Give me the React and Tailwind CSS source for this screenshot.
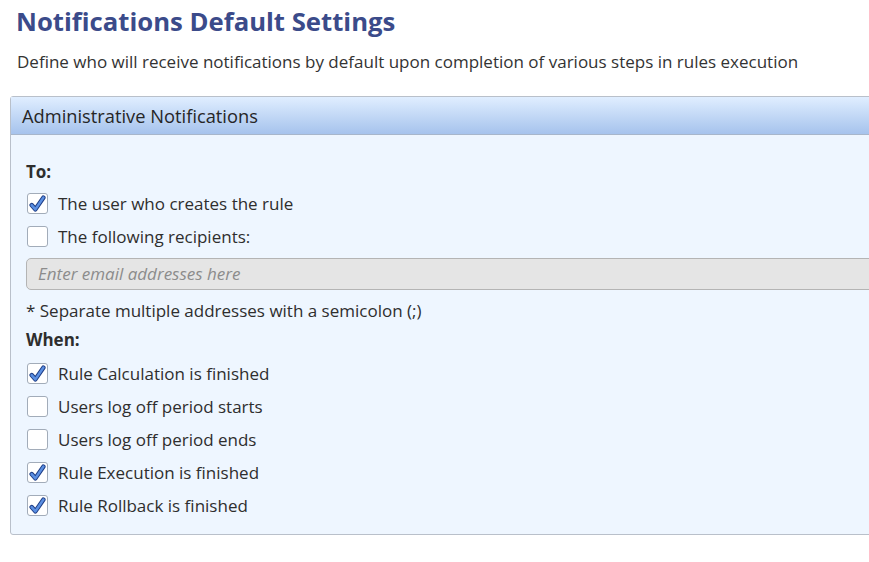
import React from "react";

const font = { fontFamily: '"Open Sans", "Noto Sans", sans-serif' };

function CheckBox({ checked }) {
  return (
    <span className="flex h-[21px] w-[21px] shrink-0 items-center justify-center rounded-[3px] border border-[#a2acb9] bg-white">
      {checked && (
        <svg width="17" height="17" viewBox="0 0 16 16">
          <path
            d="M2.5 9.5 L6 13.5 L13.5 2.5"
            fill="none"
            stroke="#1e3d85"
            strokeWidth="4.2"
            strokeLinecap="round"
            strokeLinejoin="round"
          />
          <path
            d="M2.5 9.5 L6 13.5 L13.5 2.5"
            fill="none"
            stroke="#5a8fe2"
            strokeWidth="2.4"
            strokeLinecap="round"
            strokeLinejoin="round"
          />
        </svg>
      )}
    </span>
  );
}

function Row({ checked, label }) {
  return (
    <div className="flex h-[33px] items-center gap-[10px] pl-[1px]">
      <CheckBox checked={checked} />
      <span className="text-[17px] text-[#2e2e2e]">{label}</span>
    </div>
  );
}

const whenItems = [
  { label: "Rule Calculation is finished", checked: true },
  { label: "Users log off period starts", checked: false },
  { label: "Users log off period ends", checked: false },
  { label: "Rule Execution is finished", checked: true },
  { label: "Rule Rollback is finished", checked: true },
];

export default function App() {
  return (
    <div className="min-h-[562px] w-[869px] overflow-hidden bg-white" style={font}>
      <div className="pl-[16px] pt-[6px]">
        <h1 className="text-[25.7px] font-bold leading-[32px] text-[#3b4b8a]">
          Notifications Default Settings
        </h1>
      </div>
      <p className="mt-[13px] pl-[17px] text-[17px] leading-[22px] text-[#333]">
        Define who will receive notifications by default upon completion of various steps in rules execution
      </p>

      <div className="ml-[10px] mt-[23px] w-[880px] rounded-[3px] border border-[#b9c0ca] bg-[#eef6ff]">
        <div className="flex h-[38px] items-center border-b border-[#a7b6cb] bg-gradient-to-b from-[#e0eeff] to-[#a6c3ed] px-[11px] text-[18.3px] text-[#262626]">
          Administrative Notifications
        </div>
        <div className="px-[15px] pb-[12px] pt-[22px]">
          <div className="flex h-[30px] items-center text-[17px] font-bold text-[#2e2e2e]">To:</div>
          <Row checked label="The user who creates the rule" />
          <Row checked={false} label="The following recipients:" />
          <div className="mt-[5px] flex h-[32px] items-center rounded-[5px] border border-[#b4b4b4] bg-[#e5e5e5] px-[11px] text-[17px] italic text-[#8c8c8c]">
            Enter email addresses here
          </div>
          <div className="mt-[7px] flex h-[28px] items-center text-[17px] text-[#2e2e2e]">
            * Separate multiple addresses with a semicolon (;)
          </div>
          <div className="mt-[1px] flex h-[28px] items-center text-[17px] font-bold text-[#2e2e2e]">When:</div>
          <div className="mt-[3px]">
            {whenItems.map((item) => (
              <Row key={item.label} checked={item.checked} label={item.label} />
            ))}
          </div>
        </div>
      </div>
    </div>
  );
}
